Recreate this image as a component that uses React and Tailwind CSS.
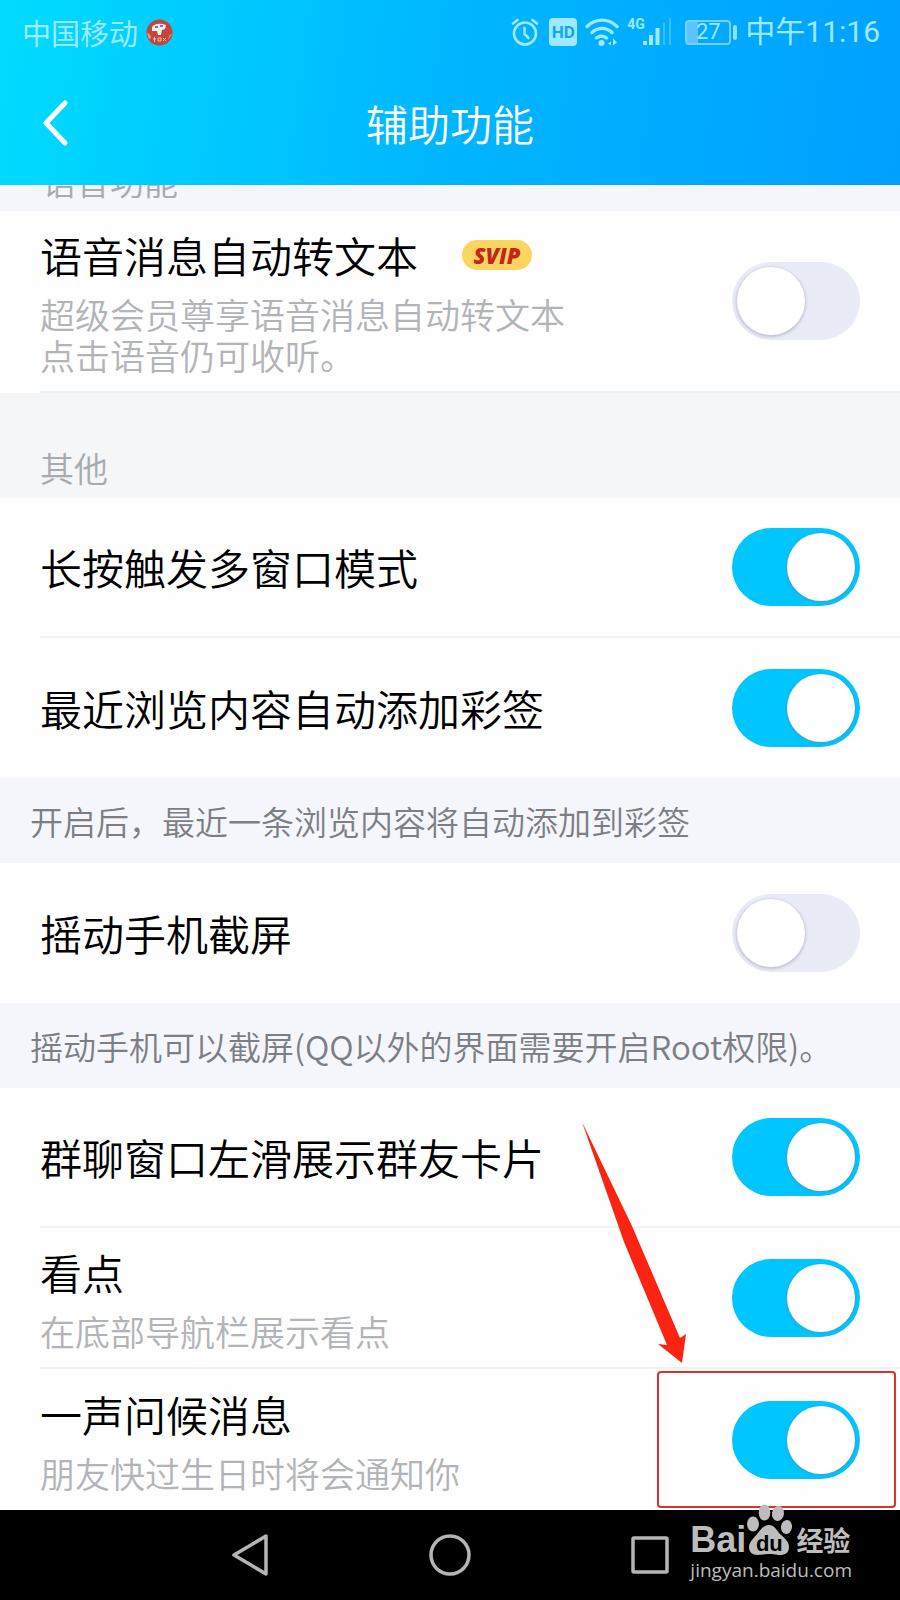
import React, { useState } from "react";

function AlarmIcon() {
  return (
    <svg width="28" height="28" viewBox="0 0 28 28" fill="none" stroke="currentColor" strokeWidth="2.6" strokeLinecap="round">
      <circle cx="14" cy="15.5" r="11" />
      <path d="M13.5 10v6l4 4" />
      <path d="M2 5.5 6.5 2M26 5.5 21.5 2" />
    </svg>
  );
}

function WifiIcon() {
  return (
    <svg width="34" height="28" viewBox="0 0 34 28" fill="none" stroke="currentColor" strokeWidth="3.4" strokeLinecap="round">
      <path d="M2 8.5C10.5 0 23.5 0 32 8.5" />
      <path d="M7 14.5c6-5.5 14-5.5 20 0" />
      <path d="M11.5 20c3-2.5 7-2.5 10 0" />
      <circle cx="16.5" cy="25" r="3" fill="currentColor" stroke="none" />
      <path d="M23 25.5l3-2v4zM28 20.5v7l4-3z" fill="currentColor" stroke="none" />
    </svg>
  );
}

function SignalIcon() {
  return (
    <svg width="30" height="28" viewBox="0 0 30 28" fill="currentColor">
      <rect x="0" y="23" width="4" height="4" />
      <rect x="6" y="17" width="4" height="10" />
      <rect x="12.5" y="10" width="4" height="17" />
      <rect x="20" y="5" width="2" height="22" opacity="0.35" />
      <rect x="26" y="0" width="2" height="27" opacity="0.35" />
    </svg>
  );
}

function StatusBar() {
  return (
    <div className="flex h-16 items-center justify-between pl-[22px] pr-5 text-[#9fe8ff]">
      <div className="flex items-center gap-2">
        <span className="text-[29px] leading-8">中国移动</span>
        <svg width="27" height="27" viewBox="0 0 27 27">
          <circle cx="13.5" cy="13.5" r="13" fill="#c4453f" />
          <path d="M6 8c3-4 9-4 14-2l-1 4-3 1-1 5h-3l-1-4-5 0z" fill="#e8f0f4" />
          <path d="M9 8h3M14 7h3" stroke="#7d4a55" strokeWidth="1.5" />
          <path d="M1 14c2 0 4 2 4 5l-2 1zM26 15c-3 0-3 3-4 6z" fill="#e5a04f" />
          <path d="M7 20h3M8.5 18v5M12 19h3v3h-3zM17 19l3 3M20 19l-3 3" stroke="#f0c3a0" fill="none" />
        </svg>
      </div>
      <div className="flex items-center">
        <AlarmIcon />
        <span className="ml-2.5 flex h-7 w-7 items-center justify-center rounded-sm bg-[#9fe8ff] font-[Roboto,sans-serif] text-[17px] font-bold leading-7 text-[#0ba9f5]">
          HD
        </span>
        <span className="ml-2 flex">
          <WifiIcon />
        </span>
        <span className="relative ml-6 flex">
          <span className="absolute -left-4 -top-0.5 font-[Roboto,sans-serif] text-sm font-bold leading-4">4G</span>
          <SignalIcon />
        </span>
        <span className="ml-3 flex items-center gap-0.5">
          <span className="flex h-[25px] w-[46px] items-center justify-center rounded border-2 border-[#6fd2ff] bg-linear-to-r from-[#5cc4fb] from-27% to-transparent to-27% font-[Roboto,sans-serif] text-[22px] leading-6">
            27
          </span>
          <span className="h-[15px] w-1 rounded-sm bg-[#8fdfff]" />
        </span>
        <span className="ml-2 font-[Roboto,'Noto_Sans_CJK_SC',sans-serif] text-[30px] leading-8">中午11:16</span>
      </div>
    </div>
  );
}

function Header() {
  return (
    <header className="bg-linear-[98deg] from-[#00dcff] via-[#00b6ff] to-[#00a0ff] text-white">
      <StatusBar />
      <div className="grid h-[121px] grid-cols-[1fr_auto_1fr] items-center pb-1">
        <button type="button" aria-label="返回" className="ml-10 w-8 cursor-pointer">
          <svg width="30" height="48" viewBox="0 0 30 48" fill="none" stroke="currentColor" strokeWidth="5" strokeLinecap="round" strokeLinejoin="round">
            <path d="M25 4 6 24l19 20" />
          </svg>
        </button>
        <h1 className="text-[42px] font-[350] leading-[48px]">辅助功能</h1>
      </div>
    </header>
  );
}

function Switch({ id, checked, onChange }) {
  return (
    <input
      id={id}
      type="checkbox"
      role="switch"
      checked={checked}
      onChange={onChange}
      className="flex h-[78px] w-32 shrink-0 cursor-pointer appearance-none items-center rounded-full bg-[#e9ebf6] p-[5px] before:h-[68px] before:w-[68px] before:rounded-full before:bg-white before:shadow-[0_1px_3px_1px_rgba(120,120,140,0.35)] checked:justify-end checked:bg-[#00c6ff]"
    />
  );
}

function Row({ id, title, desc, badge, on = false, last = false, children }) {
  const [checked, setChecked] = useState(on);

  return (
    <div className="relative bg-[#fefefe] pl-10">
      <div
        className={`flex items-center justify-between gap-6 pr-10 ${desc ? "min-h-[141px]" : "min-h-[140px]"} ${
          last ? "" : "border-b-2 border-[#eff1f3]"
        }`}
      >
        <label htmlFor={id} className={`cursor-pointer ${desc ? "pb-4 pt-5" : ""}`}>
          <span className="flex items-center gap-[44px]">
            <span className="text-[42px] font-[350] leading-[48px] text-black">{title}</span>
            {badge}
          </span>
          {desc && (
            <span className="mt-[14px] block whitespace-pre-line text-[35px] font-[350] leading-[41px] text-[#b2b4b8]">{desc}</span>
          )}
        </label>
        <Switch id={id} checked={checked} onChange={(e) => setChecked(e.target.checked)} />
      </div>
      {children}
    </div>
  );
}

function Note({ children }) {
  return (
    <p className="flex min-h-[85px] items-center bg-[#f4f6fb] px-[30px] text-[33px] font-[350] leading-10 text-[#7c7e83]">
      {children}
    </p>
  );
}

function SvipBadge() {
  return (
    <span className="flex h-[30px] w-[70px] items-center justify-center rounded-full bg-[#fcd560] font-['Open_Sans',sans-serif] text-[22px] font-extrabold italic leading-7 text-[#c5261b]">
      SVIP
    </span>
  );
}

function Arrow() {
  return (
    <svg className="pointer-events-none absolute right-[214px] top-[34px]" width="104" height="242" viewBox="0 0 104 242" fill="#fb2312">
      <path d="M0 0 50 104 98 216l6-4-4 29-24-19 9 1L42 120Z" />
    </svg>
  );
}

function NavBar() {
  return (
    <nav className="h-[90px] bg-black text-[#b5b5b5]">
      <div className="mx-auto grid h-full w-2/3 grid-cols-3 place-items-center">
        <button type="button" aria-label="后退" className="cursor-pointer">
          <svg width="38" height="44" viewBox="0 0 38 44" fill="none" stroke="currentColor" strokeWidth="3.5" strokeLinejoin="round">
            <path d="M3 22 35 3v38z" />
          </svg>
        </button>
        <button type="button" aria-label="主页" className="cursor-pointer">
          <svg width="42" height="42" viewBox="0 0 42 42" fill="none" stroke="currentColor" strokeWidth="3.5">
            <circle cx="21" cy="21" r="19" />
          </svg>
        </button>
        <button type="button" aria-label="最近任务" className="cursor-pointer">
          <svg width="38" height="38" viewBox="0 0 38 38" fill="none" stroke="currentColor" strokeWidth="3.5">
            <rect x="2" y="2" width="34" height="34" rx="1" />
          </svg>
        </button>
      </div>
    </nav>
  );
}

function Watermark() {
  return (
    <div className="pointer-events-none absolute bottom-[18px] right-12 text-[#bdbdbd]">
      <div className="flex items-end">
        <span className="font-['Liberation_Sans',sans-serif] text-[36px] font-bold leading-9">Bai</span>
        <span className="relative flex">
          <svg width="46" height="54" viewBox="0 0 46 54" fill="currentColor">
            <ellipse cx="7" cy="20" rx="6" ry="7.5" />
            <ellipse cx="18.5" cy="8.5" rx="5.8" ry="8" />
            <ellipse cx="32" cy="9.5" rx="6" ry="7.5" transform="rotate(8 32 9.5)" />
            <ellipse cx="40.5" cy="23" rx="5.5" ry="7" transform="rotate(8 40.5 23)" />
            <path d="M23 21c5 0 7 4 10 8 4 4 10 8 10 14s-4 8-9 8c-4 0-6-1-11-1s-7 1-11 1c-6 0-9-3-9-8s5-9 9-14c3-4 6-8 11-8z" />
          </svg>
          <span className="absolute inset-x-0 bottom-0.5 text-center font-['Liberation_Sans',sans-serif] text-[22px] font-bold leading-6 text-black">
            du
          </span>
        </span>
        <span className="ml-1 text-[27px] font-bold leading-9">经验</span>
      </div>
      <div className="font-['Open_Sans',sans-serif] text-[19px] leading-6">jingyan.baidu.com</div>
    </div>
  );
}

export default function App() {
  return (
    <div lang="zh-CN" className="relative flex min-h-screen flex-col overflow-hidden bg-[#fefefe] font-['Noto_Sans_CJK_SC',sans-serif]">
      <Header />
      <main className="flex-1">
        {/* section heading scrolled half under the header */}
        <div className="flex h-[26px] items-end overflow-hidden bg-[#f4f6fc] pb-2.5 pl-[42px]">
          <h2 className="text-[34px] font-[350] leading-[41px] text-[#a8aaae]">语音功能</h2>
        </div>
        <Row
          id="voice-to-text"
          title="语音消息自动转文本"
          badge={<SvipBadge />}
          desc={"超级会员尊享语音消息自动转文本\n点击语音仍可收听。"}
        />

        <div className="flex h-[105px] items-end bg-[#f5f6f8] pb-2.5 pl-10">
          <h2 className="text-[34px] font-[350] leading-[41px] text-[#a8aaae]">其他</h2>
        </div>
        <Row id="multi-window" title="长按触发多窗口模式" on />
        <Row id="auto-tag" title="最近浏览内容自动添加彩签" on last />
        <Note>开启后，最近一条浏览内容将自动添加到彩签</Note>
        <Row id="shake" title="摇动手机截屏" last />
        <Note>摇动手机可以截屏(QQ以外的界面需要开启Root权限)。</Note>

        <section className="relative">
          <Row id="group-card" title="群聊窗口左滑展示群友卡片" on />
          <Row id="kandian" title="看点" desc="在底部导航栏展示看点" on />
          <Row id="greeting" title="一声问候消息" desc="朋友快过生日时将会通知你" on last>
            <div className="pointer-events-none absolute bottom-0.5 right-1 top-0.5 w-[239px] rounded-sm border-2 border-[#d9322c]" />
          </Row>
          <Arrow />
        </section>
      </main>
      <NavBar />
      <Watermark />
    </div>
  );
}
